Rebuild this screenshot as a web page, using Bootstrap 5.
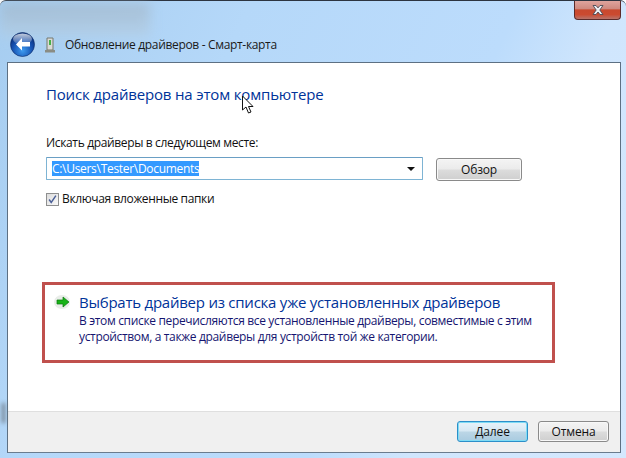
<!DOCTYPE html>
<html lang="ru">
<head>
<meta charset="utf-8">
<title>Обновление драйверов</title>
<link href="https://cdn.jsdelivr.net/npm/bootstrap@5.3.0/dist/css/bootstrap.min.css" rel="stylesheet">
<style>
html,body{margin:0;width:626px;height:458px;overflow:hidden;background:#fff}
body{font-family:"Open Sans","Noto Sans",sans-serif;font-size:12px;line-height:16px;color:#111}
.glass{width:626px;height:458px;padding:1px 5px 5px 7px;border-radius:6px 6px 0 0;border-top:1px solid #2c3440;
 background:linear-gradient(115deg,#a6cdf0 0%,#b5d8f9 30%,#bcdcfc 62%,#d0e6fd 74%,#d4e8fe 100%);position:relative;display:flex;flex-direction:column}
.blur-bg{position:absolute;left:0;top:2px;width:150px;height:34px;background:linear-gradient(#9fb0bf,#b6cfe4);filter:blur(6px);opacity:.6}
.smudge{position:absolute;left:2px;top:402px;width:3px;height:20px;background:#6b7783;filter:blur(2px)}
.closer{position:absolute;right:5px;top:0;width:47px;height:19px;border:1px solid #5b2b2a;border-top:0;border-radius:0 0 4px 4px;
 background:linear-gradient(#dfa49d 0%,#cf8a80 42%,#c8492f 50%,#cb4a30 75%,#b8736a 100%);display:flex;align-items:center;justify-content:center}
.title-strip{height:60px;padding:30px 0 0 3px;gap:7px;position:relative}
.back-btn{width:25px;height:25px;flex:none}
.dev-icon{width:12px;height:16px;flex:none;margin:5px 2px 0 2px}
.title-text{font-size:12px;color:#1a1a1a;white-space:nowrap;letter-spacing:-.33px;margin-top:5px}
.client{flex:1;background:#fff;border:1px solid #5d7083;border-bottom:1px solid #6a7c8e;display:flex;flex-direction:column;min-height:0}
.body-area{flex:1;padding:21px 0 0 38px;min-height:0}
.heading-text{font-size:15px;line-height:20px;color:#003399;letter-spacing:-.17px;white-space:nowrap}
.search-label{margin-top:31px;letter-spacing:-.35px;white-space:nowrap}
.path-row{margin-top:6px;gap:13px;align-items:flex-start}
.path-box{width:377px;height:23px;border:1px solid #7eb4d4;border-top-color:#6a9fc4;background:#fff;padding:0 6px 0 5px;border-radius:1px}
.selected-path{background:#3399ff;color:#fff;line-height:15px;letter-spacing:-.3px;white-space:nowrap}
.combo-caret{width:0;height:0;border:4px solid transparent;border-top:4px solid #111;border-bottom:0;margin-right:1px}
.aero-btn{height:24px;border:1px solid #8a8a8a;border-radius:3px;background:linear-gradient(#f4f4f4 0%,#ebebeb 48%,#dcdcdc 52%,#cfcfcf 100%);box-shadow:inset 0 0 0 1px #f8f8f8;
 font:inherit;color:#111;padding:0;display:flex;align-items:center;justify-content:center}
.browse-btn{width:86px;margin-top:1px;height:23px;letter-spacing:-.2px}
.check-row{margin-top:10px;gap:3px;letter-spacing:-.37px;white-space:nowrap}
.tick-box{width:13px;height:13px;border:1px solid #8e8f8f;background:linear-gradient(135deg,#dcdcdc,#fafafa);flex:none;display:block}
.choice-box{width:513px;height:81px;margin:75px 0 0 -4px;border:3px solid #c0504d;padding:8px 0 0 9px;gap:8px}
.arrow-ic{width:17px;height:14px;flex:none;margin-top:2px}
.choice-head{font-size:15px;line-height:19px;color:#003399;letter-spacing:-.24px;white-space:nowrap}
.choice-desc{color:#151570;margin-top:1px;line-height:16px;letter-spacing:-.34px;white-space:nowrap}
.foot{height:41px;background:#f0f0f0;border-top:1px solid #dfdfdf;padding:0 11px 0 0;gap:10px;align-items:flex-start;justify-content:flex-end;flex:none}
.foot-btn{width:71px;height:21px;margin-top:9px;letter-spacing:-.1px}
.primary-aero{border-color:#2c8fc9;box-shadow:inset 0 0 0 1px #7fdcf5;background:linear-gradient(#e8f3f9 0%,#d6e8f3 48%,#bcd6e6 52%,#a9cbe0 100%)}
.cursor-ic{position:absolute;left:241px;top:94px;width:14px;height:20px}
</style>
</head>
<body>
<div class="glass">
  <div class="blur-bg"></div>
  <div class="smudge"></div>
  <div class="closer">
    <svg width="16" height="12" viewBox="0 0 16 12"><path d="M3 1.500h3l2 2.400 2-2.400h3L9.800 6 13 10.500h-3L8 8 6 10.500H3L6.200 6z" fill="#eef0f4" stroke="#4a4a55" stroke-width=".9"/></svg>
  </div>
  <div class="title-strip d-flex align-items-start">
    <svg class="back-btn" viewBox="0 0 25 25"><defs><radialGradient id="bb" cx=".5" cy=".75" r=".7"><stop offset="0" stop-color="#3f9cf0"/><stop offset=".6" stop-color="#1550b0"/><stop offset="1" stop-color="#0a2f78"/></radialGradient><linearGradient id="bs" x1="0" y1="0" x2="0" y2="1"><stop offset="0" stop-color="#fff" stop-opacity=".75"/><stop offset="1" stop-color="#fff" stop-opacity=".1"/></linearGradient></defs><circle cx="12.500" cy="12.500" r="12" fill="url(#bb)" stroke="#0b2a66" stroke-width=".6"/><ellipse cx="12.500" cy="7" rx="9.500" ry="5.500" fill="url(#bs)"/><path d="M12 6 6 12.500l6 6v-4h8v-4.500h-8z" fill="#fff"/></svg>
    <svg class="dev-icon" viewBox="0 0 12 16"><path d="M3 1h6v12H3z" fill="#d9dad6" stroke="#77796f"/><path d="M5 3h2v5H5z" fill="#46b048"/><path d="M1 13h10v2.500H1z" fill="#8a8c84"/></svg>
    <span class="title-text">Обновление драйверов - Смарт-карта</span>
  </div>
  <div class="client">
    <div class="body-area">
      <div class="heading-text">Поиск драйверов на этом компьютере</div>
      <div class="search-label">Искать драйверы в следующем месте:</div>
      <div class="path-row d-flex">
        <div class="path-box d-flex align-items-center justify-content-between">
          <span class="selected-path">C:\Users\Tester\Documents</span>
          <span class="combo-caret"></span>
        </div>
        <button type="button" class="aero-btn browse-btn">Обзор</button>
      </div>
      <div class="check-row d-flex align-items-center">
        <svg class="tick-box" viewBox="0 0 13 13"><path d="M2.500 6.500 5 10l5.500-8" fill="none" stroke="#4a5f97" stroke-width="1.700"/></svg>
        <span>Включая вложенные папки</span>
      </div>
      <div class="choice-box d-flex">
        <svg class="arrow-ic" viewBox="0 0 17 14"><ellipse cx="8" cy="7" rx="8" ry="7" fill="#dfe6df" opacity=".7"/><path d="M9 2l6 5-6 5V9H3V5h6z" fill="#18b318" stroke="#0c7a10" stroke-width=".7"/></svg>
        <div>
          <div class="choice-head">Выбрать драйвер из списка уже установленных драйверов</div>
          <div class="choice-desc">В этом списке перечисляются все установленные драйверы, совместимые с этим<br>устройством, а также драйверы для устройств той же категории.</div>
        </div>
      </div>
    </div>
    <div class="foot d-flex">
      <button type="button" class="aero-btn foot-btn primary-aero">Далее</button>
      <button type="button" class="aero-btn foot-btn">Отмена</button>
    </div>
  </div>
  <svg class="cursor-ic" viewBox="0 0 14 20"><path d="M1.500 1v14l3.500-3 2.500 6 2.500-1-2.500-5.500H12z" fill="#fff" stroke="#111" stroke-width="1"/></svg>
</div>
<script src="https://cdn.jsdelivr.net/npm/bootstrap@5.3.0/dist/js/bootstrap.bundle.min.js"></script>
</body>
</html>
